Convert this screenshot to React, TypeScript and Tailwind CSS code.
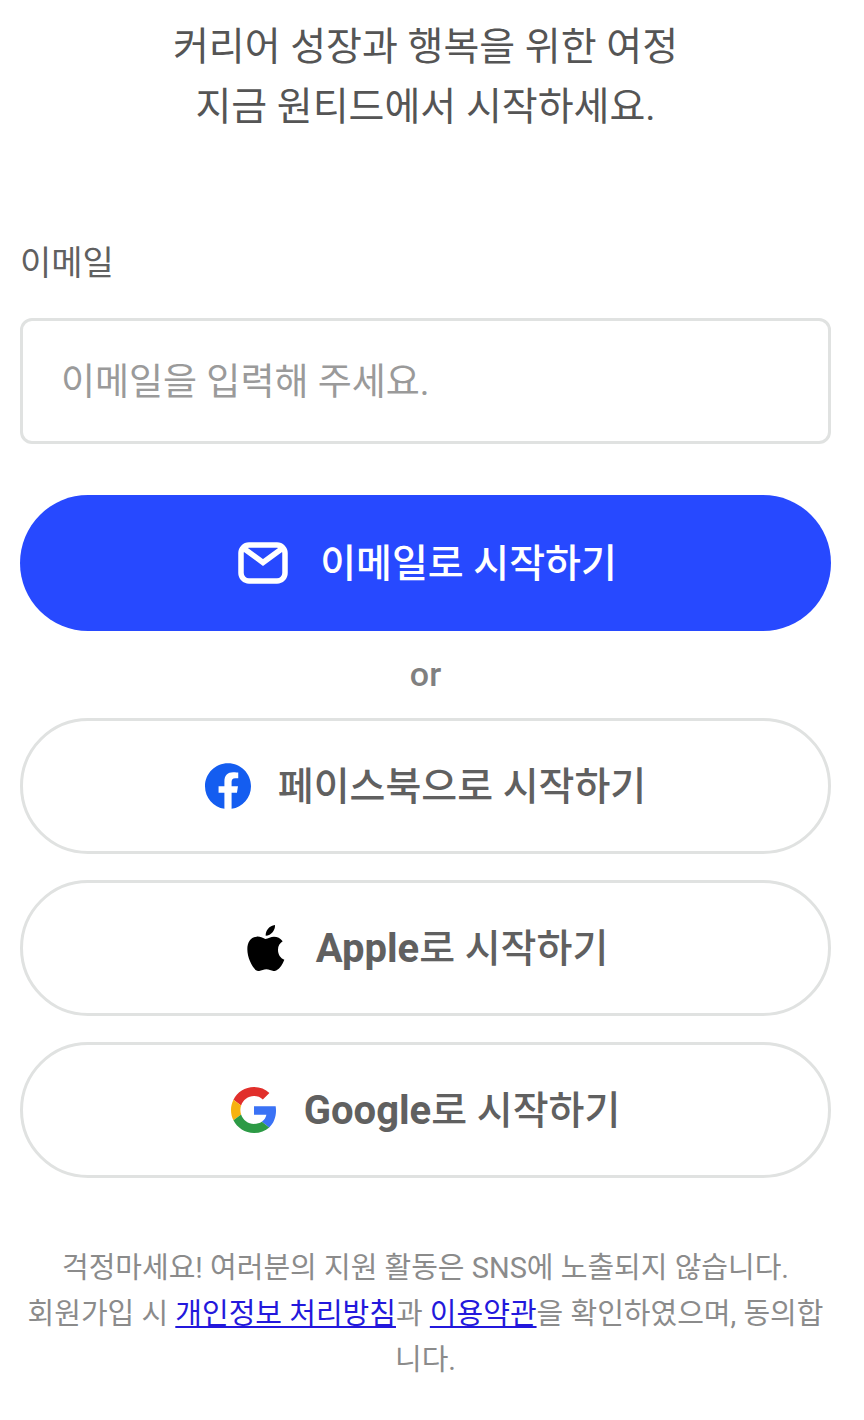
import type { ReactNode } from "react";

function MailIcon() {
  return (
    <svg viewBox="-4 0 54 42" className="w-[54px] h-[42px] shrink-0" fill="none" stroke="currentColor" strokeWidth="5.5" aria-hidden="true">
      <rect x="3" y="3" width="44" height="36" rx="8" />
      <path d="M4.5 5.5 25 20.5 45.5 5.5" />
    </svg>
  );
}

function FacebookIcon() {
  return (
    <svg viewBox="0 0 24 24" className="size-[46px] shrink-0" aria-hidden="true">
      <path
        fill="#145df0"
        d="M24 12.073c0-6.627-5.373-12-12-12s-12 5.373-12 12c0 5.99 4.388 10.954 10.125 11.854v-8.385H7.078v-3.47h3.047V9.43c0-3.007 1.792-4.669 4.533-4.669 1.312 0 2.686.235 2.686.235v2.953H15.83c-1.491 0-1.956.925-1.956 1.874v2.25h3.328l-.532 3.47h-2.796v8.385C19.612 23.027 24 18.062 24 12.073z"
      />
    </svg>
  );
}

function AppleIcon() {
  return (
    <svg viewBox="51 45 138 138" className="size-[46px] shrink-0" fill="#000" aria-hidden="true">
      <path d="M118 87C108 84 102 79 92 80C74 81 64 96 64 118C64 142 77 170 90 181C101 187 110 178 121 178C132 178 141 187 152 181C162 175 170 162 175 149C163 144 156 133 156 119C156 108 161 100 170 94C163 84 154 80 144 80C134 80 127 85 118 87Z" />
      <path d="M119 77C118 62 130 47 147 45C148 60 136 77 119 77Z" />
    </svg>
  );
}

function GoogleIcon() {
  return (
    <svg viewBox="0 0 48 48" className="size-[46px] shrink-0" aria-hidden="true">
      <path fill="#e12f2b" d="M24 9.5c3.54 0 6.71 1.22 9.21 3.6l6.85-6.85C35.9 2.38 30.47 0 24 0 14.62 0 6.51 5.38 2.56 13.22l7.98 6.19C12.43 13.72 17.74 9.5 24 9.5z" />
      <path fill="#3a72f5" d="M46.98 24.55c0-1.57-.15-3.09-.38-4.55H24v9.02h12.94c-.58 2.96-2.26 5.48-4.78 7.18l7.73 6c4.51-4.18 7.09-10.36 7.09-17.65z" />
      <path fill="#f6b210" d="M10.53 28.59c-.48-1.45-.76-2.99-.76-4.59s.27-3.14.76-4.59l-7.98-6.19C.92 16.46 0 20.12 0 24c0 3.88.92 7.54 2.56 10.78l7.97-6.19z" />
      <path fill="#2c9a45" d="M24 48c6.48 0 11.93-2.13 15.89-5.81l-7.73-6c-2.15 1.45-4.92 2.3-8.16 2.3-6.26 0-11.57-4.22-13.47-9.91l-7.98 6.19C6.51 42.62 14.62 48 24 48z" />
    </svg>
  );
}

function SocialButton({ icon, children }: { icon: ReactNode; children: ReactNode }) {
  return (
    <button
      type="button"
      className="w-full h-[136px] flex items-center justify-center gap-[27px] rounded-full border-3 border-[#e0e2e1] bg-white text-[39px] leading-[60px] font-medium text-[#606060] cursor-pointer"
    >
      {icon}
      <span className="pt-0.5">{children}</span>
    </button>
  );
}

export default function App() {
  return (
    <main className="min-h-screen bg-white pt-[17px] pl-5 pr-[33px] pb-8 font-[Roboto,'Noto_Sans_CJK_KR',sans-serif]">
      <h1 className="text-center text-[39px] leading-[60px] font-normal text-[#555555]">
        커리어 성장과 행복을 위한 여정
        <br />
        지금 원티드에서 시작하세요.
      </h1>

      <form className="mt-[102px]" onSubmit={(e) => e.preventDefault()}>
        <label htmlFor="email" className="block text-[34px] leading-[48px] text-[#606060]">
          이메일
        </label>
        <input
          id="email"
          type="email"
          placeholder="이메일을 입력해 주세요."
          className="mt-[31px] w-full h-[126px] px-[38px] pt-0.5 rounded-xl border-3 border-[#e0e2e1] bg-white text-[37px] text-[#333333] placeholder:text-[#9a9a9a] outline-none focus:border-[#2749ff]"
        />
        <button
          type="submit"
          className="mt-[51px] w-full h-[136px] flex items-center justify-center gap-8 rounded-full bg-[#2749ff] text-[39px] leading-[60px] font-medium text-white cursor-pointer"
        >
          <MailIcon />
          <span className="pt-0.5">이메일로 시작하기</span>
        </button>
      </form>

      <p className="text-center text-[34px] leading-[87px] font-medium text-[#808080]">or</p>

      <div className="flex flex-col gap-[26px]">
        <SocialButton icon={<FacebookIcon />}>페이스북으로 시작하기</SocialButton>
        <SocialButton icon={<AppleIcon />}>
          <span className="text-[40px] font-bold">Apple</span>로 시작하기
        </SocialButton>
        <SocialButton icon={<GoogleIcon />}>
          <span className="text-[40px] font-bold">Google</span>로 시작하기
        </SocialButton>
      </div>

      <p className="mt-[67px] text-center text-[29px] leading-[46px] text-[#8b8b8b]">
        걱정마세요! 여러분의 지원 활동은 SNS에 노출되지 않습니다.
        <br />
        회원가입 시{" "}
        <a href="#privacy" className="text-[#2318dc] underline">
          개인정보 처리방침
        </a>
        과{" "}
        <a href="#terms" className="text-[#2318dc] underline">
          이용약관
        </a>
        을 확인하였으며, 동의합니다.
      </p>
    </main>
  );
}
